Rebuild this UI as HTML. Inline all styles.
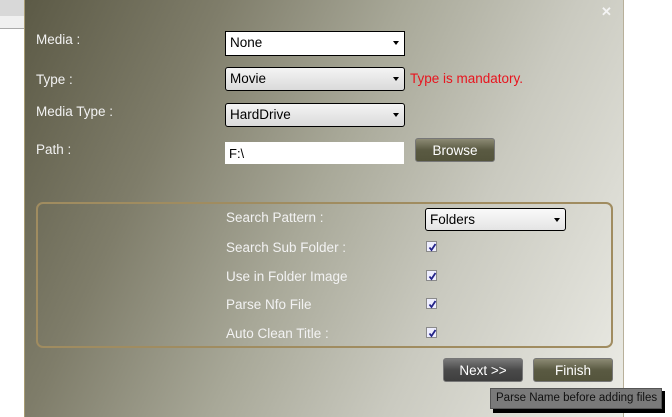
<!DOCTYPE html>
<html><head><style>
body{margin:0;width:672px;height:417px;position:relative;overflow:hidden;background:#fff;font-family:"Liberation Sans",sans-serif;font-size:13px}
.dlg{position:absolute;left:24px;top:0;width:598px;height:417px;border-left:1px solid #a89c74;border-right:1px solid #b8b09a;background:linear-gradient(115deg,#5c5a46 0%,#7f7d6a 25%,#a8a898 48%,#cacac0 70%,#ececE6 100%)}
.a{position:absolute;white-space:nowrap}
.lbl{color:#f2f2f2;font-size:13.5px}
.cb{position:absolute;border:1px solid #000;border-radius:3px;background:linear-gradient(#f4f4f4,#dadada);color:#000;font-size:13.5px;box-sizing:border-box;padding:3px 0 0 4px}
.cb::after{content:"";position:absolute;right:5px;top:9px;border-left:3.5px solid transparent;border-right:3.5px solid transparent;border-top:4px solid #000}
.chk{position:absolute;width:11px;height:11px;border:1px solid #8a8a8a;background:#eef;box-sizing:border-box}
.chk svg{position:absolute;left:0;top:0}
.btn{position:absolute;border:1px solid #777;border-radius:3px;color:#fff;text-align:center;box-sizing:border-box;font-size:13.5px;padding-top:4px}
</style></head><body>
<div class="a" style="left:0;top:0;width:24px;height:28px;background:#d8d8d8;border-bottom:1px solid #aaa"></div>
<div class="a" style="left:0;top:16px;width:24px;height:12px;background:#f0f0f0"></div>
<div class="dlg"></div>
<div class="a" style="left:601px;top:4px;color:#f4f4f4;font-size:13px;font-weight:bold">✕</div>
<div class="a lbl" style="left:36px;top:32px">Media :</div>
<div class="a lbl" style="left:36px;top:72px">Type :</div>
<div class="a lbl" style="left:36px;top:104px">Media Type :</div>
<div class="a lbl" style="left:36px;top:142px">Path :</div>
<div class="cb" style="left:225px;top:31px;width:180px;height:25px;background:#fff;border-radius:0">None</div>
<div class="cb" style="left:225px;top:67px;width:180px;height:24px">Movie</div>
<div class="a" style="left:410px;top:71px;color:#e8141e;font-size:13.5px">Type is mandatory.</div>
<div class="cb" style="left:225px;top:103px;width:180px;height:24px">HardDrive</div>
<div class="a" style="left:225px;top:142px;width:179px;height:22px;background:#fff;box-sizing:border-box;padding:4px 0 0 4px">F:\</div>
<div class="btn" style="left:415px;top:138px;width:80px;height:24px;background:linear-gradient(#8c8a74,#5a5a42 50%,#54543c)">Browse</div>
<div class="a" style="left:36px;top:202px;width:577px;height:146px;border:2px solid #a08c60;border-radius:7px;box-sizing:border-box"></div>
<div class="a lbl" style="left:226px;top:210px">Search Pattern :</div>
<div class="cb" style="left:425px;top:208px;width:141px;height:23px;background:linear-gradient(#fafafa,#e4e4e4)">Folders</div>
<div class="a lbl" style="left:226px;top:240px">Search Sub Folder :</div>
<div class="a lbl" style="left:226px;top:269px">Use in Folder Image</div>
<div class="a lbl" style="left:226px;top:297px">Parse Nfo File</div>
<div class="a lbl" style="left:226px;top:326px">Auto Clean Title :</div>
<div class="chk" style="left:426px;top:241px"><svg width="11" height="11"><path d="M2.5 5.5 L4.5 8 L8.5 2" stroke="#222288" stroke-width="1.8" fill="none"/></svg></div>
<div class="chk" style="left:426px;top:270px"><svg width="11" height="11"><path d="M2.5 5.5 L4.5 8 L8.5 2" stroke="#222288" stroke-width="1.8" fill="none"/></svg></div>
<div class="chk" style="left:426px;top:298px"><svg width="11" height="11"><path d="M2.5 5.5 L4.5 8 L8.5 2" stroke="#222288" stroke-width="1.8" fill="none"/></svg></div>
<div class="chk" style="left:426px;top:327px"><svg width="11" height="11"><path d="M2.5 5.5 L4.5 8 L8.5 2" stroke="#222288" stroke-width="1.8" fill="none"/></svg></div>
<div class="btn" style="left:443px;top:358px;width:80px;height:24px;background:linear-gradient(#7a7a7a,#4a4a4a 50%,#3e3e3e)">Next &gt;&gt;</div>
<div class="btn" style="left:533px;top:358px;width:80px;height:24px;background:linear-gradient(#8c8a74,#5a5a42 50%,#54543c)">Finish</div>
<div class="a" style="left:493px;top:391px;width:172px;height:22px;background:#000"></div>
<div class="a" style="left:490px;top:388px;width:172px;height:21px;background:#7a7a7a;border:1px solid #555;box-sizing:border-box;color:#111;font-size:11.5px;padding:3px 0 0 5px;overflow:hidden">Parse Name before adding files</div>
</body></html>
